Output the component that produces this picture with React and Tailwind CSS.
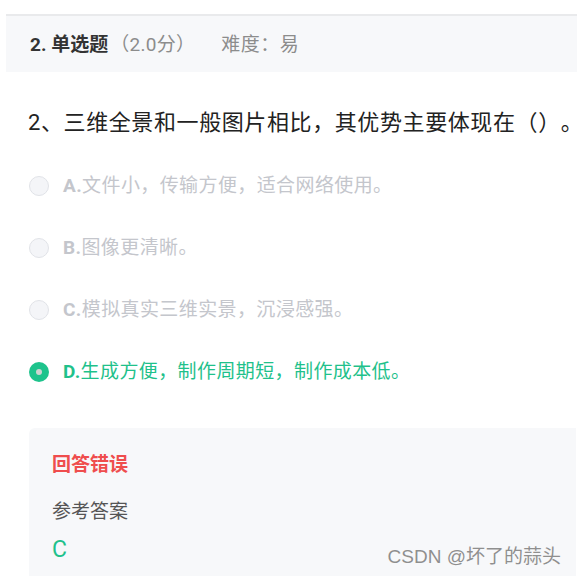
const options = [
  { key: 'A', text: '文件小，传输方便，适合网络使用。' },
  { key: 'B', text: '图像更清晰。' },
  { key: 'C', text: '模拟真实三维实景，沉浸感强。' },
  { key: 'D', text: '生成方便，制作周期短，制作成本低。', checked: true },
];

const Radio = ({ checked }) =>
  checked ? (
    <span className="w-[20px] h-[20px] rounded-full bg-[#1ec38c] flex items-center justify-center shrink-0">
      <span className="w-[6px] h-[6px] rounded-full bg-[#cfd3d1]" />
    </span>
  ) : (
    <span className="w-[20px] h-[20px] rounded-full border border-[#e1e3e8] bg-[#f4f5f8] shrink-0" />
  );

export default function App() {
  return (
    <div
      className="relative w-[577px] h-[576px] bg-white overflow-hidden flex flex-col [text-spacing-trim:space-all]"
      style={{ fontFamily: 'Roboto, "Noto Sans CJK SC", sans-serif' }}
    >
      <div className="mt-[14px] ml-[6px] h-[58px] border-t-2 border-[#e9eaec] bg-[#f7f8fa] flex items-center pl-[24px] pt-[3px] text-[19px]">
        <span className="font-bold text-[#333]">2. 单选题</span>
        <span className="ml-[2px] text-[#8c8c8c] tracking-[0.3px]">（2.0分）</span>
        <span className="ml-[26px] text-[#8c8c8c] tracking-[0.5px]">难度：易</span>
      </div>

      <div className="mt-[36px] pl-[28px] text-[22px] leading-[30px] tracking-[0.6px] text-[#222] whitespace-nowrap">
        2、三维全景和一般图片相比，其优势主要体现在（）。
      </div>

      <div className="mt-[17px] pl-[29px] flex flex-col">
        {options.map((o) => (
          <div key={o.key} className="h-[62px] flex items-center gap-[14px] text-[19px] tracking-[0.4px]">
            <Radio checked={o.checked} />
            <span className={o.checked ? 'text-[#1fc18b]' : 'text-[#c4c6cc]'}>
              <span className="font-bold">{o.key}.</span>
              {o.text}
            </span>
          </div>
        ))}
      </div>

      <div className="mt-[25px] ml-[29px] mr-[1px] flex-1 rounded-tl-[6px] bg-[#f7f8fa] pl-[23px] pt-[23px]">
        <div className="text-[19px] leading-[28px] font-bold text-[#ef4d4d]">回答错误</div>
        <div className="mt-[19px] text-[19px] leading-[28px] text-[#555]">参考答案</div>
        <div className="mt-[9px] text-[23px] leading-[30px] text-[#1fc18b]">C</div>
      </div>

      <div
        className="absolute right-[16px] bottom-[7px] text-[19px] leading-[24px] text-[#8f8f8f]"
        style={{ fontFamily: '"Liberation Sans", "Noto Sans CJK SC", sans-serif', textShadow: '0 0 1px #fff' }}
      >
        CSDN @坏了的蒜头
      </div>
    </div>
  );
}
